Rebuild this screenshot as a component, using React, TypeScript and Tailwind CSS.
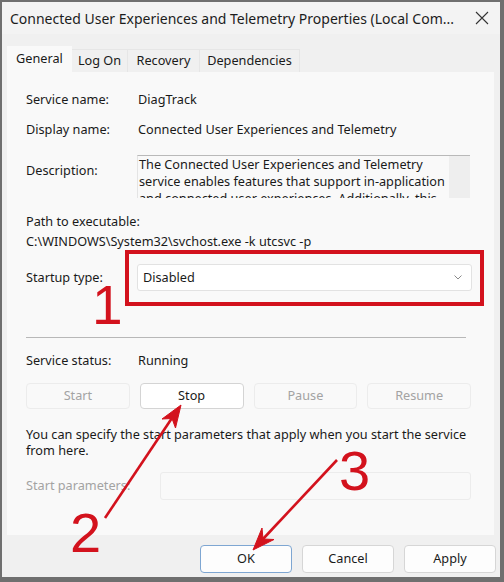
import React from "react";

const font = "font-['Noto_Sans','Open_Sans',sans-serif]";

function Row({ label, value }: { label: string; value: string }) {
  return (
    <div className="flex h-[20px] items-center">
      <span className="w-[112px] shrink-0">{label}</span>
      <span>{value}</span>
    </div>
  );
}

function ActionButton({ label, enabled }: { label: string; enabled?: boolean }) {
  return (
    <div
      className={`flex h-[26px] items-center justify-center rounded-[4px] border ${
        enabled ? "border-[#d4d4d4] bg-white text-[#1a1a1a]" : "border-[#ececec] bg-[#f9f9f9] text-[#a3a3a3]"
      }`}
    >
      {label}
    </div>
  );
}

function FooterButton({ label, primary }: { label: string; primary?: boolean }) {
  return (
    <div
      className={`flex h-[28px] w-[92px] items-center justify-center rounded-[4px] border bg-[#fdfdfd] ${
        primary ? "border-[#7ea6d2]" : "border-[#d6d6d6]"
      }`}
    >
      {label}
    </div>
  );
}

export default function App() {
  return (
    <div
      className={`relative flex h-[582px] w-[504px] flex-col border-b-[5px] border-l-2 border-r-4 border-t-2 border-[#6f6f6f] bg-[#f0f0f0] text-[12.7px] text-[#1a1a1a] ${font}`}
    >
      {/* Title bar */}
      <div className="flex h-[32px] items-center justify-between bg-[#f3f3f3] pl-[8px] pr-[10px]">
        <span className="whitespace-nowrap text-[14px] text-[#1c1c1c]">
          Connected User Experiences and Telemetry Properties (Local Com...
        </span>
        <svg width="14" height="14" viewBox="0 0 14 14" className="mr-[1px] shrink-0">
          <path d="M1 1 L13 13 M13 1 L1 13" stroke="#333" strokeWidth="1.1" />
        </svg>
      </div>

      {/* Tabs */}
      <div className="mt-[12px] flex items-end pl-[5px]">
        <div className="flex h-[26px] w-[65px] items-start justify-center bg-[#f9f9f9] pt-[3px]">General</div>
        <div className="flex h-[23px] w-[56px] items-center justify-center border-r border-t border-[#e6e6e6] bg-[#f0f0f0]">
          Log On
        </div>
        <div className="flex h-[23px] w-[72px] items-center justify-center border-r border-t border-[#e6e6e6] bg-[#f0f0f0]">
          Recovery
        </div>
        <div className="flex h-[23px] w-[100px] items-center justify-center border-r border-t border-[#e6e6e6] bg-[#f0f0f0]">
          Dependencies
        </div>
      </div>

      {/* Panel */}
      <div className="ml-[5px] mr-[6px] flex h-[463px] flex-col bg-[#f9f9f9] pl-[19px] pt-[18px]">
        <Row label="Service name:" value="DiagTrack" />
        <div className="mt-[10px]">
          <Row label="Display name:" value="Connected User Experiences and Telemetry" />
        </div>

        <div className="mt-[15px] flex">
          <span className="w-[111px] shrink-0 pt-[5px] leading-[20px]">Description:</span>
          <div className="flex h-[43px] w-[333px] overflow-hidden border-l border-t border-[#b9b9b9] border-l-[#e4e4e4] bg-[#f9f9f9]">
            <div className="flex-1 whitespace-nowrap pl-[1px] leading-[17px]">
              The Connected User Experiences and Telemetry
              <br />
              service enables features that support in-application
              <br />
              and connected user experiences. Additionally, this
            </div>
            <div className="w-[21px] shrink-0 bg-[#eeeeee]" />
          </div>
        </div>

        <div className="mt-[14px] flex h-[20px] items-center">Path to executable:</div>
        <div className="flex h-[20px] items-center">C:\WINDOWS\System32\svchost.exe -k utcsvc -p</div>

        <div className="mt-[12px] flex items-center">
          <span className="w-[111px] shrink-0">Startup type:</span>
          <div className="flex h-[27px] w-[335px] items-center justify-between rounded-[3px] border border-[#e2e2e2] bg-white pl-[5px] pr-[9px]">
            <span>Disabled</span>
            <svg width="8" height="5" viewBox="0 0 8 5">
              <path d="M0.5 0.5 L4 4 L7.5 0.5" fill="none" stroke="#8a8a8a" strokeWidth="1" />
            </svg>
          </div>
        </div>

        <div className="mt-[46px] h-px w-[440px] bg-[#b8b8b8]" />

        <div className="mt-[13px]">
          <Row label="Service status:" value="Running" />
        </div>

        <div className="mt-[12px] grid w-[445px] grid-cols-4 gap-[10px]">
          <ActionButton label="Start" />
          <ActionButton label="Stop" enabled />
          <ActionButton label="Pause" />
          <ActionButton label="Resume" />
        </div>

        <p className="mt-[17px] whitespace-nowrap leading-[16px]">
          You can specify the start parameters that apply when you start the service
          <br />
          from here.
        </p>

        <div className="mt-[14px] flex items-center">
          <span className="w-[134px] shrink-0 text-[#a3a3a3]">Start parameters:</span>
          <div className="h-[28px] w-[311px] rounded-[3px] border border-[#ececec] bg-[#f9f9f9]" />
        </div>
      </div>

      {/* Footer */}
      <div className="flex flex-1 items-start justify-end gap-[10px] pr-[4px] pt-[10px]">
        <FooterButton label="OK" primary />
        <FooterButton label="Cancel" />
        <FooterButton label="Apply" />
      </div>

      {/* Annotations */}
      <div className="pointer-events-none absolute left-[123px] top-[248px] h-[56px] w-[359px] border-4 border-[#d3121d]" />
      <span className="pointer-events-none absolute left-[90px] top-[276px] font-['Liberation_Sans',Arial,sans-serif] text-[55px] leading-none text-[#d3121d]">
        1
      </span>
      <span className="pointer-events-none absolute left-[68px] top-[503px] font-['Liberation_Sans',Arial,sans-serif] text-[56px] leading-none text-[#d3121d]">
        2
      </span>
      <span className="pointer-events-none absolute left-[337px] top-[441px] font-['Liberation_Sans',Arial,sans-serif] text-[56px] leading-none text-[#d3121d]">
        3
      </span>
      <svg className="pointer-events-none absolute -left-[2px] -top-[2px]" width="504" height="582" viewBox="0 0 504 582">
        <g fill="#d3121d" stroke="#d3121d">
          <line x1="105" y1="518" x2="172" y2="418" strokeWidth="2.6" />
          <polygon points="181,405 175.5,428 172,418.5 162,419" strokeWidth="1" />
          <line x1="337" y1="460" x2="263" y2="539" strokeWidth="2.6" />
          <polygon points="253,550 262,528 263,539 274,539.5" strokeWidth="1" />
        </g>
      </svg>
    </div>
  );
}
